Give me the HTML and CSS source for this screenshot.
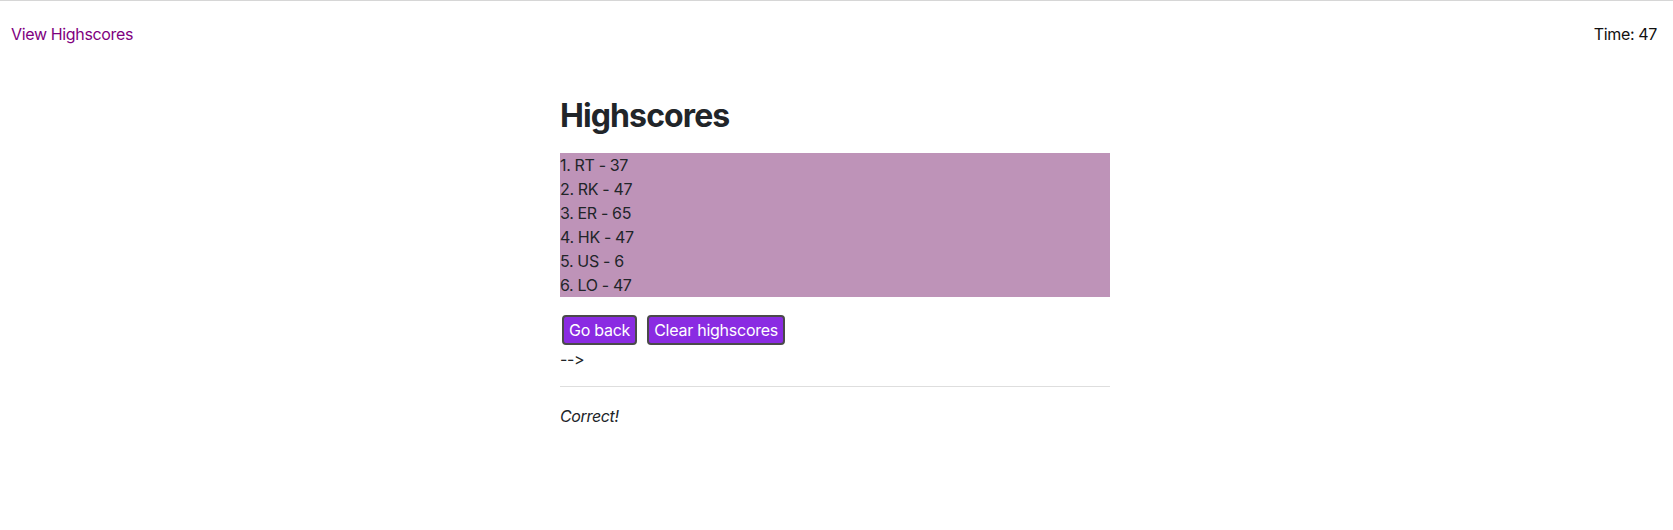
FILE: index.html
```html
<!DOCTYPE html>
<html lang="en">
<head>
<meta charset="utf-8">
<title>Highscores</title>
<link rel="stylesheet" href="styles.css">
</head>
<body>
<header class="topbar">
  <a class="view-link" href="#">View Highscores</a>
  <span class="timer">Time: 47</span>
</header>
<main class="container">
  <h1 class="title">Highscores</h1>
  <ol class="scores">
    <li>1. RT - 37</li>
    <li>2. RK - 47</li>
    <li>3. ER - 65</li>
    <li>4. HK - 47</li>
    <li>5. US - 6</li>
    <li>6. LO - 47</li>
  </ol>
  <div class="actions">
    <button class="btn">Go back</button>
    <button class="btn">Clear highscores</button>
  </div>
  <div class="stray">--&gt;</div>
  <hr class="divider">
  <p class="feedback">Correct!</p>
</main>
</body>
</html>
```
FILE: styles.css
```css
html, body {
  margin: 0;
  padding: 0;
}
body {
  font-family: Inter, "Noto Sans", sans-serif;
  font-size: 16px;
  line-height: 24px;
  letter-spacing: -0.35px;
  font-variant-ligatures: none;
  font-feature-settings: "liga" 0, "calt" 0;
  color: #212529;
  background: #fff;
  border-top: 1px solid #d6d6d6;
}
.topbar {
  display: flex;
  justify-content: space-between;
  align-items: center;
  padding: 21px 16px 0 11px;
  height: 24px;
}
.view-link {
  color: #800080;
  text-decoration: none;
}
.timer {
  color: #111;
}
.container {
  width: 550px;
  margin: 0 auto;
  padding-right: 3px;
}
.title {
  font-size: 32px;
  font-weight: 700;
  line-height: 38px;
  margin: 51px 0 18px 0;
  letter-spacing: -0.9px;
}
.scores {
  list-style: none;
  margin: 0;
  padding: 0;
  background: #be93b8;
}
.scores li {
  height: 24px;
}
.actions {
  display: flex;
  gap: 6px;
  margin-top: 16px;
}
.btn {
  margin: 2px;
  height: 30px;
  padding: 0 5px;
  font-family: inherit;
  font-size: 16px;
  letter-spacing: -0.25px;
  font-feature-settings: "liga" 0, "calt" 0;
  color: #fff;
  background: #8a2be2;
  border: 2px solid #4a4a4a;
  border-radius: 4px;
}
.stray {
  height: 24px;
}
.divider {
  border: 0;
  border-top: 1px solid #dedede;
  margin: 15px 0 17px 0;
}
.feedback {
  margin: 0;
  font-style: italic;
}
```
